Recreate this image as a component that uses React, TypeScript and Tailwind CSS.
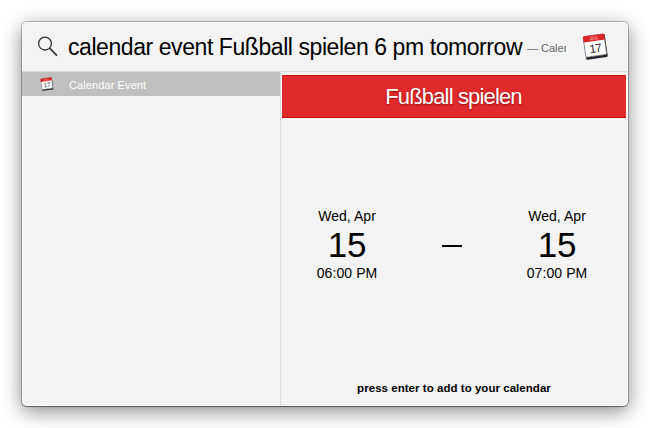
function CalendarIcon({ className }: { className: string }) {
  return (
    <svg viewBox="0 0 26 26" className={className}>
      <g transform="rotate(-8 13 13)">
        <rect x="2.4" y="2.2" width="21" height="22.3" rx="1.2" fill="#20242a" />
        <rect x="2.4" y="2" width="20.2" height="20" rx="1" fill="#fbfbfb" stroke="#77777a" strokeWidth="0.6" />
        <path d="M2.2 7.6V3q0-1.2 1.2-1.2h18.4q1.2 0 1.2 1.2v4.6z" fill="#dc2528" />
        <text x="12.7" y="6.3" textAnchor="middle" fontSize="4.6" fontWeight="bold" fill="#ffa0a0">JUL</text>
        <text x="12.5" y="18.7" textAnchor="middle" fontSize="11.5" letterSpacing="-0.7" fill="#333">17</text>
      </g>
    </svg>
  );
}

function EventTime({ time }: { time: string }) {
  return (
    <div className="flex w-20 flex-col items-center whitespace-nowrap">
      <div className="text-[14px] leading-4 tracking-[0.05px]">Wed, Apr</div>
      <div className="mt-[2px] text-[35px] leading-[38px] tracking-[-0.3px]">15</div>
      <div className="mt-px text-[14px] leading-4 tracking-[0.1px]">{time}</div>
    </div>
  );
}

export default function App() {
  return (
    <main className="flex h-[428px] w-[650px] overflow-hidden bg-white pl-[22px] pt-[22px] font-['Liberation_Sans',Arial,sans-serif] text-black">
      <section className="flex h-[384px] w-[606px] flex-col overflow-hidden rounded-[5px] bg-[#f3f3f3] shadow-[inset_0_0_0_1px_rgba(255,255,255,0.8),0_0_0_1px_rgba(0,0,0,0.26),0_1px_1px_rgba(0,0,0,0.3),0_5px_20px_rgba(0,0,0,0.48)]">
        <header className="flex h-[50px] shrink-0 items-center border-b border-[#dedede] pl-[15px] pr-[19px]">
          <svg viewBox="0 0 22 22" className="size-[22px] shrink-0" fill="none" stroke="#333">
            <circle cx="8" cy="7.6" r="6.4" strokeWidth="1.3" />
            <path d="m12.6 12.2 7.4 7.4" strokeWidth="1.7" />
          </svg>
          <div className="ml-2 w-[460px] shrink-0 whitespace-nowrap pl-px text-[23px] leading-[28px] tracking-[-0.43px]">
            calendar event Fußball spielen 6 pm tomorrow
          </div>
          <div className="mt-[3px] w-[39px] overflow-hidden whitespace-nowrap text-[11px] leading-4 text-[#666]">— Calendar</div>
          <CalendarIcon className="ml-auto size-[27px]" />
        </header>
        <div className="flex min-h-0 flex-1">
          <aside className="w-[258px] shrink-0">
            <div className="flex h-6 items-center bg-[#c0c0c0] pl-[18px] text-[11px] leading-4 tracking-[0.1px] text-white">
              <CalendarIcon className="mr-[15px] size-[14px]" />
              <span className="pt-px">Calendar Event</span>
            </div>
          </aside>
          <article className="flex flex-1 flex-col border-l border-[#dedede] px-px pt-[3px]">
            <h1 className="mr-px flex h-[43px] items-center justify-center border-y border-[#d10b0e] bg-[#e0292c] pr-px text-[22px] leading-7 tracking-[-0.85px] text-white [text-shadow:0_1px_2px_rgba(110,0,0,0.65)]">
              Fußball spielen
            </h1>
            <div className="mt-[90px] flex items-center justify-between pl-[25px] pr-[30px]">
              <EventTime time="06:00 PM" />
              <div className="mt-[3px] h-[2px] w-[20px] bg-black" />
              <EventTime time="07:00 PM" />
            </div>
            <footer className="mb-[10px] mt-auto pr-px text-center text-[11.5px] font-bold leading-4 tracking-[0.04px]">
              press enter to add to your calendar
            </footer>
          </article>
        </div>
      </section>
    </main>
  );
}
